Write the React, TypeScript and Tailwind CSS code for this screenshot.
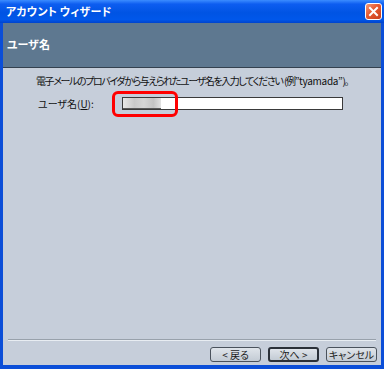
import React from "react";

const jp = "font-['Noto_Sans_CJK_JP','Noto_Sans',sans-serif] [font-feature-settings:'palt']";

function CloseButton() {
  return (
    <div className="mr-[2px] flex h-[17px] w-[17px] items-center justify-center rounded-[3px] border border-white bg-[linear-gradient(135deg,#f59a7a_0%,#e5582f_45%,#c8401e_100%)]">
      <svg width="11" height="11" viewBox="0 0 11 11">
        <path d="M2 2 L9 9 M9 2 L2 9" stroke="white" strokeWidth="2" strokeLinecap="square" />
      </svg>
    </div>
  );
}

function WizardButton({ label, isDefault }: { label: string; isDefault?: boolean }) {
  return (
    <button
      className={`flex h-[15px] w-[51px] items-center justify-center rounded-[3px] bg-[linear-gradient(to_bottom,#dfe4ea,#c3cbd4)] text-[10px] leading-none text-[#1c1c1c] ${
        isDefault ? "border-2 border-[#2a3038]" : "border border-[#4a525c]"
      }`}
    >
      {label}
    </button>
  );
}

export default function App() {
  return (
    <div className={`flex h-[369px] w-[384px] flex-col bg-[#0a49dc] ${jp}`}>
      {/* Title bar */}
      <div className="flex h-[23px] shrink-0 items-center justify-between bg-[linear-gradient(to_bottom,#3b8cff_0%,#0d5df0_18%,#0054e3_55%,#0057ea_85%,#0043cc_100%)] pl-[6px]">
        <span className="text-[11px] font-bold tracking-[0.2px] text-white">アカウント ウィザード</span>
        <CloseButton />
      </div>

      {/* Frame */}
      <div className="flex flex-1 flex-col border-x-[3px] border-b-[4px] border-[#0b4ed8]">
        {/* Header */}
        <div className="h-[45px] shrink-0 border-b border-[#34414f] bg-[#5e7890] pl-[4px] pt-[7px]">
          <span className="text-[11px] font-bold leading-[14px] text-white">ユーザ名</span>
        </div>

        {/* Body */}
        <div className="flex flex-1 flex-col bg-[#c6ceda]">
          <div className="flex-1 pl-[33px] pt-[6px] text-[10px] text-[#111]">
            <p className="whitespace-pre leading-[14px] tracking-[-1.4px]">
              電子メールのプロバイダから与えられたユーザ名を入力してください  (例
              <span className="tracking-[-0.3px]">”tyamada”</span>)。
            </p>
            <div className="mt-[9px] flex items-center pl-[2px]">
              <label className="w-[84px] leading-[13px]">ユーザ名(<span className="underline">U</span>):</label>
              <div className="relative h-[13px] w-[221px] border border-[#3a3a3a] bg-white">
                <div className="h-full w-[38px] bg-[linear-gradient(to_right,#e8e8e8,#c9c9c9_30%,#d6d6d6_55%,#c4c4c4_80%,#e2e2e2)] shadow-[inset_0_-1px_0_#5a5a5a]" />
                <div className="absolute left-[-11px] top-[-7px] h-[26px] w-[66px] rounded-[6px] border-[3px] border-[#ff0000]" />
              </div>
            </div>
          </div>

          {/* Footer */}
          <div className="shrink-0">
            <div className="mx-[5px] border-t border-b border-t-[#98a1ab] border-b-[#e8edf2]" />
            <div className="flex justify-end gap-[7px] pr-[4px] pt-[6px] pb-[3px]">
              <WizardButton label="< 戻る" />
              <WizardButton label="次へ >" isDefault />
              <WizardButton label="キャンセル" />
            </div>
          </div>
        </div>
      </div>
    </div>
  );
}
